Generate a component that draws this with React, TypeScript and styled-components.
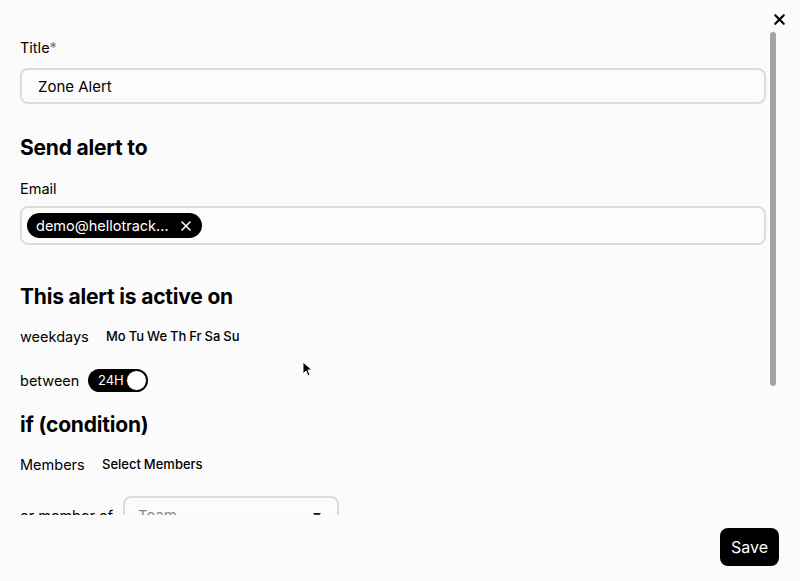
import React from "react";
import styled, { createGlobalStyle } from "styled-components";
import { X } from "lucide-react";

const GlobalStyle = createGlobalStyle`
  html, body {
    margin: 0;
    padding: 0;
    background: #fbfbfb;
    font-family: Inter, "Noto Sans", Arial, sans-serif;
    color: #000;
  }
`;

const Modal = styled.div`
  position: relative;
  width: 800px;
  height: 581px;
  display: flex;
  flex-direction: column;
  background: #fbfbfb;
  overflow: hidden;
`;

const TopBar = styled.div`
  height: 30px;
  display: flex;
  justify-content: flex-end;
  align-items: flex-start;
  padding: 11px 12px 0 0;
  box-sizing: border-box;
`;

const CloseButton = styled.button`
  border: none;
  background: none;
  padding: 0;
  display: flex;
  color: #000;
  cursor: pointer;
`;

const ScrollArea = styled.div`
  position: relative;
  height: 485px;
  width: 778px;
  overflow: hidden;
  box-sizing: border-box;
  padding: 8px 12px 0 20px;
`;

// the thumb of the scroll area, drawn over its right edge
const ScrollThumb = styled.div`
  position: absolute;
  left: 770px;
  top: 32px;
  width: 6px;
  height: 354px;
  border-radius: 3px;
  background: #a3a3a3;
`;

const Content = styled.div`
  display: flex;
  flex-direction: column;
`;

const Label = styled.div<{ $gap: number }>`
  font-size: 14.5px;
  line-height: 20px;
  margin-bottom: ${(p) => p.$gap}px;
`;

const Required = styled.span`
  color: #777;
`;

const TextInput = styled.div`
  height: 36px;
  border: 2px solid #dcdcdc;
  border-radius: 8px;
  box-sizing: border-box;
  display: flex;
  align-items: center;
  padding-left: 16px;
  font-size: 15px;
  background: #fcfcfc;
`;

const Heading = styled.h2<{ $top: number }>`
  margin: ${(p) => p.$top}px 0 0 0;
  font-size: 21px;
  line-height: 28px;
  font-weight: 700;
  letter-spacing: -0.2px;
`;

const TagBox = styled.div`
  height: 39px;
  border: 2px solid #dcdcdc;
  border-radius: 8px;
  box-sizing: border-box;
  display: flex;
  align-items: center;
  padding-left: 5px;
  background: #fcfcfc;
`;

const Chip = styled.div`
  height: 25px;
  background: #000;
  color: #fff;
  border-radius: 13px;
  display: flex;
  align-items: center;
  gap: 9px;
  padding: 0 8px 0 9px;
  font-size: 14.5px;
`;

const Row = styled.div<{ $top: number }>`
  display: flex;
  align-items: center;
  height: 24px;
  margin-top: ${(p) => p.$top}px;
  font-size: 14.5px;
`;

const RowLabel = styled.span<{ $w: number }>`
  width: ${(p) => p.$w}px;
  flex-shrink: 0;
`;

const SmallText = styled.span`
  font-size: 13px;
  font-weight: 500;
  word-spacing: -0.5px;
`;

const Toggle = styled.div`
  width: 60px;
  height: 23px;
  background: #000;
  border-radius: 12px;
  display: flex;
  align-items: center;
  justify-content: space-between;
  padding: 0 1px 0 10px;
  box-sizing: border-box;
  color: #fff;
  font-size: 13px;
`;

const Knob = styled.div`
  width: 21px;
  height: 21px;
  border-radius: 50%;
  background: #fff;
  border: 1.5px solid #000;
  box-sizing: border-box;
`;

const SelectRow = styled.div`
  display: flex;
  align-items: center;
  margin-top: 20px;
  font-size: 14.5px;
`;

const SelectBox = styled.div`
  width: 216px;
  height: 38px;
  border: 2px solid #dcdcdc;
  border-radius: 8px;
  box-sizing: border-box;
  display: flex;
  align-items: center;
  justify-content: space-between;
  padding: 0 16px 0 13px;
  color: #888;
  font-size: 15px;
  background: #fcfcfc;
`;

const Caret = styled.div`
  width: 0;
  height: 0;
  border-left: 4px solid transparent;
  border-right: 4px solid transparent;
  border-top: 5px solid #222;
`;

const Footer = styled.div`
  flex: 1;
  display: flex;
  justify-content: flex-end;
  align-items: flex-start;
  padding: 13px 21px 0 0;
  background: #fbfbfb;
`;

const SaveButton = styled.button`
  width: 59px;
  height: 38px;
  background: #000;
  color: #fff;
  border: none;
  border-radius: 8px;
  font-family: Inter, "Noto Sans", Arial, sans-serif;
  font-size: 16px;
`;

const Cursor = styled.svg`
  position: absolute;
  left: 302px;
  top: 361px;
`;

const App = () => {
  return (
    <>
      <GlobalStyle />
      <Modal>
        <TopBar>
          <CloseButton>
            <X size={17} strokeWidth={3} />
          </CloseButton>
        </TopBar>
        <ScrollArea>
          <Content>
            <Label $gap={10}>
              Title<Required>*</Required>
            </Label>
            <TextInput>Zone Alert</TextInput>

            <Heading $top={30}>Send alert to</Heading>
            <Label $gap={7} style={{ marginTop: 17 }}>
              Email
            </Label>
            <TagBox>
              <Chip>
                demo@hellotrack...
                <X size={16} strokeWidth={2.4} />
              </Chip>
            </TagBox>

            <Heading $top={38}>This alert is active on</Heading>
            <Row $top={13}>
              <RowLabel $w={86}>weekdays</RowLabel>
              <SmallText>Mo Tu We Th Fr Sa Su</SmallText>
            </Row>
            <Row $top={20}>
              <RowLabel $w={68}>between</RowLabel>
              <Toggle>
                24H
                <Knob />
              </Toggle>
            </Row>

            <Heading $top={19}>if (condition)</Heading>
            <Row $top={13}>
              <RowLabel $w={82}>Members</RowLabel>
              <SmallText>Select Members</SmallText>
            </Row>
            <SelectRow>
              <RowLabel $w={103}>or member of</RowLabel>
              <SelectBox>
                Team
                <Caret />
              </SelectBox>
            </SelectRow>
          </Content>
        </ScrollArea>
        <ScrollThumb />
        <Footer>
          <SaveButton>Save</SaveButton>
        </Footer>
        <Cursor width="10" height="16" viewBox="0 0 10 16">
          <path d="M1 1 L1 13 L4 10 L6 15 L8 14 L6 9 L10 9 Z" fill="#000" stroke="#fff" strokeWidth="1" />
        </Cursor>
      </Modal>
    </>
  );
};

export default App;
